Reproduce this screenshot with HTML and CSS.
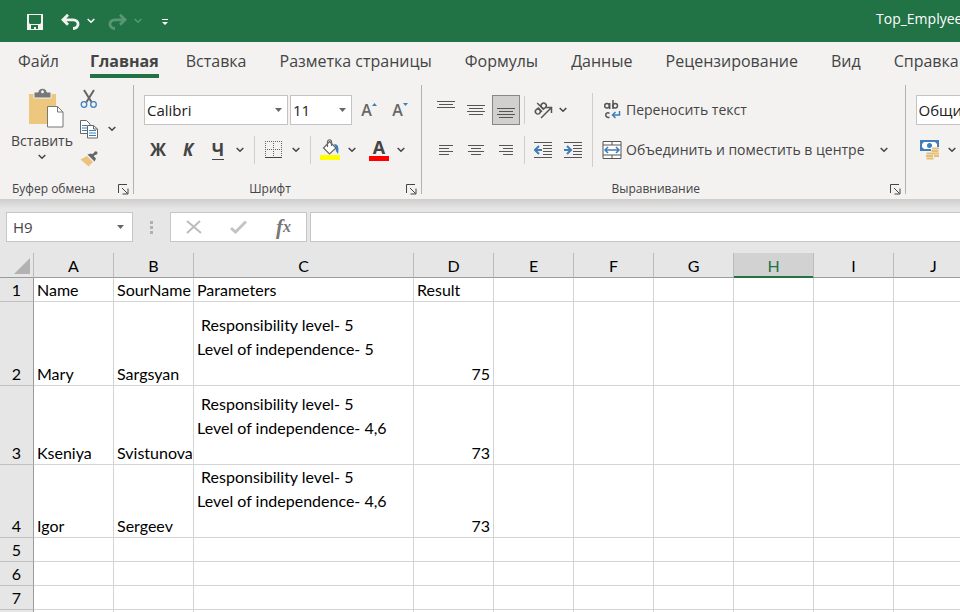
FILE: index.html
```html
<!DOCTYPE html>
<html lang="ru">
<head>
<meta charset="utf-8">
<title>Top_Emplyee</title>
<link rel="stylesheet" href="styles.css">
</head>
<body>
<svg class="defs" aria-hidden="true">
  <symbol id="chev" viewBox="0 0 8 6"><path d="M.7 1 4 4.300 7.300 1" fill="none" stroke="currentColor" stroke-width="1.500"/></symbol>
  <symbol id="tri" viewBox="0 0 8 4"><path d="M0 0h7L3.500 4z" fill="currentColor"/></symbol>
  <symbol id="launch" viewBox="0 0 11 11"><path d="M.5 9V.5H9M4 4l5.500 5.500M10 4.500V10H4.500" fill="none" stroke="currentColor"/></symbol>
</svg>

<header class="titlebar">
  <div class="quick">
    <button aria-label="Сохранить"><svg width="16" height="16" viewBox="0 0 16 16"><path d="M0 0h16v16H0z" fill="#f3f2f1"/><path d="M2 1h12v8l-1 1H3L2 9zM4 11h7v4H9v-2H7v2H4z" fill="#217346"/></svg></button>
    <button aria-label="Отменить"><svg width="19" height="16" viewBox="0 0 19 16"><path d="M7 .8 2 5.800l5 5M2.500 5.800h9.500c7 0 6.500 8.700 0 8.700" fill="none" stroke="#f3f2f1" stroke-width="2.800"/></svg></button>
    <button class="arrow" aria-label="Список отмены"><svg width="8" height="6"><use href="#chev"/></svg></button>
    <button class="dim redo" aria-label="Вернуть"><svg width="19" height="16" viewBox="0 0 19 16"><path d="m12 .8 5 5-5 5M16.500 5.800H7c-7 0-6.500 8.700 0 8.700" fill="none" stroke="#fff" stroke-width="2.800"/></svg></button>
    <button class="arrow dim" aria-label="Список возврата"><svg width="8" height="6"><use href="#chev"/></svg></button>
    <button class="more" aria-label="Настройка панели"><svg width="6" height="7" viewBox="0 0 6 7"><path d="M0 0h6v1H0zM0 3h6L3 6z" fill="#fff"/></svg></button>
  </div>
  <div class="doc">Top_Emplyee</div>
</header>

<nav class="tabs">
  <a href="#">Файл</a>
  <a href="#" class="active">Главная</a>
  <a href="#">Вставка</a>
  <a href="#">Разметка страницы</a>
  <a href="#">Формулы</a>
  <a href="#">Данные</a>
  <a href="#">Рецензирование</a>
  <a href="#">Вид</a>
  <a href="#">Справка</a>
</nav>

<section class="ribbon">
  <div class="group clipboard">
    <div class="body">
      <button class="paste">
        <svg width="36" height="40" viewBox="0 0 36 40"><path d="M1 6h27v30H1z" fill="#eec77f"/><path d="M6 10V4h4c1-5 8-5 9 0h4v6z" fill="#777" stroke="#f3f2f1"/><circle cx="14.500" cy="3.800" r="1.500" fill="#f3f2f1"/><path d="M19.500 18.500h10l5.500 5.500v15H19.500z" fill="#fff" stroke="#777"/><path d="M29.500 18.500V24H35" fill="none" stroke="#777"/></svg>
        <span>Вставить</span>
        <svg width="8" height="6"><use href="#chev"/></svg>
      </button>
      <div class="tools">
        <button class="tool" aria-label="Вырезать"><svg width="18" height="20" viewBox="0 0 18 20"><path d="m4 1 7.500 12M14 1 6.500 13" stroke="#666" stroke-width="2" fill="none"/><circle cx="4" cy="15.500" r="2.800" fill="none" stroke="#4080bd" stroke-width="1.300"/><circle cx="13.500" cy="15.500" r="2.800" fill="none" stroke="#4080bd" stroke-width="1.300"/></svg></button>
        <div class="row">
          <button class="tool" aria-label="Копировать"><svg width="18" height="19" viewBox="0 0 18 19"><path d="M.5.5h6l3.500 3.500v9.500H.5z" fill="#fff" stroke="#666"/><path d="M2 5.500h5M2 8h5M2 10.500h5" stroke="#3e7ebb"/><path d="M7.500 5.500h6L17.500 9v9H7.500z" fill="#fff" stroke="#666"/><path d="M13.500 5.500V9h4" fill="none" stroke="#666"/><path d="M9 10.500h7M9 13h7M9 15.500h7" stroke="#3e7ebb"/></svg></button>
          <button class="arrow" aria-label="Варианты копирования"><svg width="8" height="6"><use href="#chev"/></svg></button>
        </div>
        <button class="tool" aria-label="Формат по образцу"><svg width="18" height="16" viewBox="0 0 18 16"><path d="M.5 8.500 7 5l6 6-4.500 4.500z" fill="#edc27c"/><path d="m7.500 3.500 7 7 1.500-3-5-5z" fill="#666"/><path d="m11.500 5 4.500-3" stroke="#666" stroke-width="2.500"/><circle cx="15.800" cy="1.900" r="1.700" fill="#666"/></svg></button>
      </div>
    </div>
    <footer><span>Буфер обмена</span><button aria-label="Параметры буфера"><svg width="11" height="11"><use href="#launch"/></svg></button></footer>
  </div>
  <span class="divider"></span>

  <div class="group font">
    <div class="body">
      <div class="rows">
        <div class="row">
          <label class="combo name"><select aria-label="Шрифт"><option>Calibri</option></select><svg width="8" height="4"><use href="#tri"/></svg></label>
          <label class="combo size"><select aria-label="Размер"><option>11</option></select><svg width="8" height="4"><use href="#tri"/></svg></label>
          <button class="icon grow" aria-label="Увеличить шрифт"><span class="letter">A</span><svg width="5" height="14" viewBox="0 0 5 14"><path d="M0 3 2.500 0 5 3z" fill="#3e7ebb"/></svg></button>
          <button class="icon grow" aria-label="Уменьшить шрифт"><span class="letter">A</span><svg width="5" height="14" viewBox="0 0 5 14"><path d="m0 0 2.500 3L5 0z" fill="#3e7ebb"/></svg></button>
        </div>
        <div class="row">
          <button class="icon"><b>Ж</b></button>
          <button class="icon"><b><i>К</i></b></button>
          <button class="icon"><b><u>Ч</u></b></button>
          <button class="arrow" aria-label="Подчеркивание"><svg width="8" height="6"><use href="#chev"/></svg></button>
          <span class="sep"></span>
          <button class="icon" aria-label="Границы"><svg width="18" height="18" viewBox="0 0 18 18"><path d="M.5 0v16M8.500 0v16M16.500 0v16M0 .5h17M0 8.500h17" fill="none" stroke="#666" stroke-dasharray="1 1"/><path d="M0 16.500h17" stroke="#444"/></svg></button>
          <button class="arrow" aria-label="Виды границ"><svg width="8" height="6"><use href="#chev"/></svg></button>
          <span class="sep"></span>
          <button class="icon" aria-label="Цвет заливки"><svg width="20" height="22" viewBox="0 0 20 22"><path d="M9.500 2.500 16 9l-6.500 6L3.500 9z" fill="#fff" stroke="#666" stroke-width="1.200"/><path d="M7.500 8V3c0-3 4-3 4 0v4" fill="none" stroke="#666" stroke-width="1.200"/><path d="M14 5c5 0 5 5 4 10-1-2-3-3-2-6z" fill="#3e7ebb"/><path d="M0 16h20v5H0z" fill="#ff0"/></svg></button>
          <button class="arrow" aria-label="Выбор заливки"><svg width="8" height="6"><use href="#chev"/></svg></button>
          <button class="icon color" aria-label="Цвет текста"><b>А</b></button>
          <button class="arrow" aria-label="Выбор цвета"><svg width="8" height="6"><use href="#chev"/></svg></button>
        </div>
      </div>
    </div>
    <footer><span>Шрифт</span><button aria-label="Параметры шрифта"><svg width="11" height="11"><use href="#launch"/></svg></button></footer>
  </div>
  <span class="divider"></span>

  <div class="group align">
    <div class="body">
      <div class="rows">
        <div class="row">
          <button class="icon" aria-label="По верхнему краю"><svg width="18" height="18" viewBox="0 0 18 18"><path d="M0 .5h18M2 3.500h14M0 6.500h18" stroke="#555"/></svg></button>
          <button class="icon" aria-label="Посередине"><svg width="18" height="18" viewBox="0 0 18 18"><path d="M0 4.500h18M2 7.500h14M0 10.500h18M2 13.500h14" stroke="#555"/></svg></button>
          <button class="icon pressed" aria-label="По нижнему краю"><svg width="18" height="18" viewBox="0 0 18 18"><path d="M0 7.500h18M2 10.500h14M0 13.500h18M2 16.500h14" stroke="#555"/></svg></button>
          <span class="sep tight"></span>
          <button class="icon" aria-label="Ориентация"><svg width="20" height="20" viewBox="0 0 20 20"><g fill="none" stroke="#555" stroke-width="1.500"><g transform="rotate(-45 7 8)"><circle cx="3" cy="9" r="2.500"/><path d="M5.800 6v6M8.500 2.500V12"/><circle cx="11.200" cy="9" r="2.600"/></g><path d="M8 18 18 8M13 7.500h5.500V13"/></g></svg></button>
          <button class="arrow joined" aria-label="Виды ориентации"><svg width="8" height="6"><use href="#chev"/></svg></button>
        </div>
        <div class="row">
          <button class="icon" aria-label="По левому краю"><svg width="16" height="12" viewBox="0 0 16 12"><path d="M1 1.500h14M1 4.500h10M1 7.500h14M1 10.500h10" stroke="#555"/></svg></button>
          <button class="icon" aria-label="По центру"><svg width="16" height="12" viewBox="0 0 16 12"><path d="M0 1.500h16M3 4.500h10M0 7.500h16M3 10.500h10" stroke="#555"/></svg></button>
          <button class="icon" aria-label="По правому краю"><svg width="16" height="12" viewBox="0 0 16 12"><path d="M1 1.500h14M5 4.500h10M1 7.500h14M5 10.500h10" stroke="#555"/></svg></button>
          <span class="sep tight"></span>
          <button class="icon" aria-label="Уменьшить отступ"><svg width="18" height="16" viewBox="0 0 18 16"><path d="M0 .5h18M9 3.500h9M9 6.500h9M9 9.500h9M9 12.500h9M0 15.500h18" stroke="#555"/><path d="M8 8H1M5 4 1 8l4 4" fill="none" stroke="#3e7ebb" stroke-width="2"/></svg></button>
          <button class="icon" aria-label="Увеличить отступ"><svg width="18" height="16" viewBox="0 0 18 16"><path d="M0 .5h18M9 3.500h9M9 6.500h9M9 9.500h9M9 12.500h9M0 15.500h18" stroke="#555"/><path d="M0 8h7M3 4l4 4-4 4" fill="none" stroke="#3e7ebb" stroke-width="2"/></svg></button>
        </div>
      </div>
      <span class="sep tall"></span>
      <div class="rows">
        <button class="wide"><svg width="20" height="22" viewBox="0 0 20 22"><g fill="none" stroke="#555" stroke-width="1.500"><circle cx="5" cy="6.800" r="2.300"/><path d="M7.700 4v6M11 1v9"/><circle cx="13.200" cy="6.800" r="2.300"/><path d="M7.500 14.200c-5-2-5 5.500 0 4"/></g><path d="M17.500 12v4H11M13.500 13 10.500 16l3 3" fill="none" stroke="#3e7ebb" stroke-width="1.500"/></svg><span>Переносить текст</span></button>
        <div class="row">
          <button class="wide"><svg width="20" height="20" viewBox="0 0 20 20"><path d="M1 1.500h18v17H1zM1 5h18M1 15h18M10 1v4M10 15v4" fill="#fff" stroke="#555"/><path d="M3 10h14M6 7l-3 3 3 3M14 7l3 3-3 3" fill="none" stroke="#3e7ebb" stroke-width="1.500"/></svg><span>Объединить и поместить в центре</span></button>
          <button class="arrow merge" aria-label="Варианты объединения"><svg width="8" height="6"><use href="#chev"/></svg></button>
        </div>
      </div>
    </div>
    <footer><span>Выравнивание</span><button aria-label="Параметры выравнивания"><svg width="11" height="11"><use href="#launch"/></svg></button></footer>
  </div>
  <span class="divider"></span>

  <div class="group number">
    <div class="body">
      <div class="rows">
        <label class="combo name"><select aria-label="Числовой формат"><option>Общий</option></select></label>
        <div class="row">
          <button class="icon" aria-label="Финансовый формат"><svg width="20" height="20" viewBox="0 0 20 20"><path d="M0 0h19v11H0z" fill="#3e7ebb"/><path d="M4 2h11l2 2v3l-2 2H4L2 7V4z" fill="#fff"/><circle cx="9.500" cy="5.500" r="2.500" fill="#3e7ebb"/><path d="M11 7h8v10h-5v3H6v-8h5z" fill="#f3f2f1"/><path d="M12 8.500h7M11.500 11h7M12 13.500h7M14 16h5M6.500 13.500h7M6 16h7M6.500 18.500h7" stroke="#e6bd77" stroke-width="1.800"/></svg></button>
          <button class="arrow" aria-label="Валюта"><svg width="8" height="6"><use href="#chev"/></svg></button>
        </div>
      </div>
    </div>
  </div>
</section>

<section class="formula">
  <label class="cellname"><input value="H9" aria-label="Имя ячейки"><svg width="8" height="4"><use href="#tri"/></svg></label>
  <svg class="grip" width="3" height="13" viewBox="0 0 3 13"><path d="M0 0h3v3H0zM0 5h3v3H0zM0 10h3v3H0z" fill="#b0b0b0"/></svg>
  <div class="actions">
    <button aria-label="Отмена"><svg width="16" height="14" viewBox="0 0 16 14"><path d="m1 1 14 12M14 1 1 13" stroke="#bcbcbc" stroke-width="2"/></svg></button>
    <button aria-label="Ввод"><svg width="17" height="14" viewBox="0 0 17 14"><path d="m1 8 4.500 4L16 1.500" fill="none" stroke="#c4c4c4" stroke-width="3"/></svg></button>
    <button class="fx" aria-label="Вставить функцию">f<sub>x</sub></button>
  </div>
  <input class="entry" aria-label="Строка формул">
</section>

<main class="sheet">
  <table>
    <colgroup><col class="num"><col><col><col class="long"><col><col><col><col><col><col><col></colgroup>
    <thead>
      <tr><th class="corner"><svg width="16" height="16" viewBox="0 0 16 16"><path d="M16 0v16H0z" fill="#b2b2b2"/></svg></th><th>A</th><th>B</th><th>C</th><th>D</th><th>E</th><th>F</th><th>G</th><th class="current">H</th><th>I</th><th>J</th></tr>
    </thead>
    <tbody>
      <tr><th>1</th><td>Name</td><td>SourName</td><td>Parameters</td><td>Result</td><td></td><td></td><td></td><td></td><td></td><td></td></tr>
      <tr class="r2"><th>2</th><td>Mary</td><td>Sargsyan</td><td class="multi"> Responsibility level- 5<br>Level of independence- 5<br>&nbsp;</td><td class="value">75</td><td></td><td></td><td></td><td></td><td></td><td></td></tr>
      <tr class="r3"><th>3</th><td>Kseniya</td><td>Svistunova</td><td class="multi"> Responsibility level- 5<br>Level of independence- 4,6<br>&nbsp;</td><td class="value">73</td><td></td><td></td><td></td><td></td><td></td><td></td></tr>
      <tr><th>4</th><td>Igor</td><td>Sergeev</td><td class="multi"> Responsibility level- 5<br>Level of independence- 4,6<br>&nbsp;</td><td class="value">73</td><td></td><td></td><td></td><td></td><td></td><td></td></tr>
      <tr><th>5</th><td></td><td></td><td></td><td></td><td></td><td></td><td></td><td></td><td></td><td></td></tr>
      <tr><th>6</th><td></td><td></td><td></td><td></td><td></td><td></td><td></td><td></td><td></td><td></td></tr>
      <tr><th>7</th><td></td><td></td><td></td><td></td><td></td><td></td><td></td><td></td><td></td><td></td></tr>
      <tr><th></th><td></td><td></td><td></td><td></td><td></td><td></td><td></td><td></td><td></td><td></td></tr>
    </tbody>
  </table>
</main>
</body>
</html>
```
FILE: styles.css
```css
* { box-sizing: border-box; }
body {
  margin: 0;
  height: 100vh;
  overflow: hidden;
  display: flex;
  flex-direction: column;
  background: #e6e6e6;
  color: #444;
  font: 15px/20px "Open Sans", "Noto Sans", sans-serif;
}
button, select, input { font: inherit; color: inherit; }
button {
  display: flex;
  align-items: center;
  justify-content: center;
  padding: 0;
  border: 0;
  background: none;
}
svg { display: block; flex: none; }
.defs { position: absolute; width: 0; height: 0; }

.titlebar {
  flex: none;
  display: flex;
  justify-content: space-between;
  height: 42px;
  overflow: hidden;
  background: #217346;
  color: #fff;
}
.quick { display: flex; align-items: center; padding: 2px 0 0 27px; }
.quick button { flex: none; margin-right: 8px; }
.quick button:first-child { margin-right: 18px; }
.quick .arrow { margin: 0 13px 0 -1px; padding-bottom: 2px; }
.quick .more { margin: 0 0 0 7px; }
.dim { opacity: .25; }
.doc { flex: none; width: 84px; font-size: 14px; line-height: 38px; white-space: nowrap; }

.tabs {
  flex: none;
  display: flex;
  gap: 33px;
  height: 42px;
  padding-left: 18px;
  background: #f3f2f1;
  font-size: 16px;
}
.tabs a {
  height: 36px;
  color: #444;
  line-height: 38px;
  text-decoration: none;
  white-space: nowrap;
}
.tabs .active {
  margin: 0 -6px 0 -2px;
  border-bottom: 4px solid #217346;
  font-weight: 700;
}

.ribbon {
  flex: none;
  display: flex;
  height: 115px;
  background: #f3f2f1;
  font-size: 14px;
}
.group { flex: none; display: flex; flex-direction: column; padding: 0 0 0 10px; }
.body { display: flex; align-items: center; height: 92px; }
.group footer {
  display: flex;
  align-items: center;
  height: 20px;
  margin: 4px 4px 0 -10px;
  font-size: 12px;
}
.group footer span { flex: 1; text-align: center; }
.group footer button { width: 11px; }
.divider { flex: none; width: 1px; margin: 1px 0 5px; background: #b4b2b0; }

.clipboard { padding-right: 9px; }
.clipboard footer { margin-right: -5px; }
.clipboard footer span { padding-left: 12px; text-align: left; }
.clipboard .body { align-items: flex-start; }
.paste { width: 64px; margin-top: 4px; flex-direction: column; gap: 3px; }
.paste > svg:first-child { margin-left: 8px; }
.tools { display: flex; flex-direction: column; margin-left: 4px; }
.tool { width: 22px; height: 30px; }
.tools .arrow { width: 24px; }

.rows { display: flex; flex-direction: column; gap: 10px; }
.row { display: flex; align-items: center; gap: 2px; }
.rows > .row { height: 30px; }
.tools .row { gap: 0; }
.icon { flex: none; width: 28px; height: 30px; font-size: 17px; }
.rows .arrow { width: 12px; height: 30px; }
.grow { margin-left: 1px; }
.pressed { border: 1px solid #8a8886; background: #d2d0ce; }
.letter { font-size: 16px; font-weight: 600; color: #666; }
.sep { flex: none; width: 1px; height: 28px; margin: 0 3px 0 6px; background: #d0cecc; }
.sep.tight { margin: 0 2px; }
.sep.tall { height: 74px; margin: 0 9px 0 5px; }
.icon u { text-decoration: none; border-bottom: 1px solid #444; display: block; line-height: 19px; }
.color { margin-left: 5px; }
.color b { width: 20px; border-bottom: 5px solid #f00; line-height: 17px; font-size: 18px; }
.rows .joined { margin-left: -2px; }
.combo { position: relative; display: flex; height: 30px; font-size: 15px; }
.combo select {
  width: 100%;
  padding: 0 2px;
  border: 1px solid #c6c4c2;
  border-radius: 0;
  background: #fff;
  color: #222;
  appearance: none;
}
.combo svg, .cellname svg { position: absolute; right: 5px; top: 13px; color: #666; }
.cellname svg { right: 8px; }
.combo.name { width: 144px; }
.combo.size { width: 62px; }
.font { padding-right: 7px; }
.font footer { margin-right: -3px; }
.wide { height: 30px; gap: 4px; white-space: nowrap; align-self: flex-start; }
.rows .merge { margin-left: 11px; }
.align { padding-right: 15px; }
.align footer { margin-right: -11px; }

.formula {
  flex: none;
  display: flex;
  align-items: center;
  height: 54px;
  padding: 2px 0 0 6px;
  background: linear-gradient(#cecece, #e6e6e6 10px);
}
.formula input, .actions { height: 30px; border: 1px solid #c6c6c6; background: #fff; }
.cellname { position: relative; width: 127px; }
.cellname input { display: block; width: 100%; padding: 0 6px; }
.grip { margin: 0 17px; }
.actions { display: flex; width: 137px; }
.actions button { flex: 1; }
.actions .fx { font: italic 700 21px/24px "Liberation Serif", serif; color: #777; }
.fx sub { font-size: 16px; line-height: 1; }
.formula .entry { flex: 1; min-width: 0; margin-left: 3px; border-right: 0; }

.sheet { flex: 1; min-height: 0; overflow: hidden; background: #fff; }
table {
  width: 974px;
  table-layout: fixed;
  border-spacing: 0;
  color: #000;
  font: 16px/23px Lato, sans-serif;
}
col { width: 80px; }
.num { width: 34px; }
.long { width: 220px; }
th, td {
  height: 24px;
  padding: 0 3px;
  border: solid #d4d4d4;
  border-width: 0 1px 1px 0;
  overflow: hidden;
  text-align: left;
  vertical-align: bottom;
  white-space: nowrap;
}
th { padding: 0; background: #e6e6e6; font-weight: 400; text-align: center; }
tbody th { border-right-color: #9b9b9b; border-bottom-color: #c0c0c0; }
thead th {
  height: 25px;
  border-right: 1px solid #bcbcbc;
  border-bottom-color: #9b9b9b;
}
thead .current {
  border-bottom-color: #217346;
  box-shadow: inset 0 -1px #217346;
  background: #d2d2d2;
  color: #217346;
}
.corner svg { margin: 0 0 3px 14px; }
.r2 th, .r2 td { height: 84px; }
.r3 th, .r3 td { height: 79px; }
.multi { line-height: 24px; white-space: pre; }
.value { text-align: right; }
```
